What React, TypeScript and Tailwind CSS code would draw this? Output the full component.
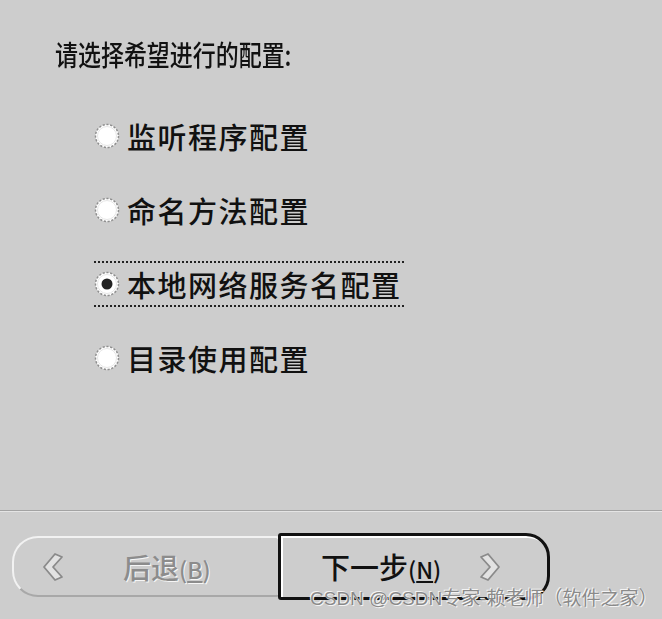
import React from "react";

const cjk = { fontFamily: '"Noto Sans CJK SC", "Noto Sans", sans-serif' };

function Radio({ checked }: { checked?: boolean }) {
  return (
    <svg width="26" height="26" viewBox="0 0 26 26" className="shrink-0">
      <circle cx="13" cy="13" r="11.5" fill="#ffffff" stroke="#8e8e8e" strokeWidth="1.5" strokeDasharray="2.2 1.6" />
      <circle cx="13" cy="13" r="9.5" fill="#ffffff" stroke="#e6e6e6" strokeWidth="1" />
      {checked && <circle cx="13" cy="13" r="5.5" fill="#222" />}
    </svg>
  );
}

function Option({ label, checked, focused }: { label: string; checked?: boolean; focused?: boolean }) {
  return (
    <div
      className={`flex items-center gap-[7px] h-[46px] w-[310px] ${focused ? "border-y-2 border-dotted border-[#222]" : "border-y-2 border-transparent"}`}
    >
      <Radio checked={checked} />
      <span className="text-[29px] leading-none font-medium text-[#111] tracking-[1.5px]" style={cjk}>
        {label}
      </span>
    </div>
  );
}

function Chevron({ right }: { right?: boolean }) {
  const d = "M15 3 L4 16 L15 29 L22 26 L13 16 L22 6 Z";
  return (
    <svg width="26" height="32" viewBox="0 0 26 32" style={right ? { transform: "scaleX(-1)" } : undefined}>
      <path d={d} fill="#e2e2e2" stroke="#8a8a8a" strokeWidth="1.8" strokeLinejoin="round" />
    </svg>
  );
}

export default function App() {
  return (
    <div className="w-[662px] h-[619px] bg-[#cdcdcd] flex flex-col overflow-hidden relative" style={cjk}>
      <div className="h-[510px] flex flex-col pt-[36px] pl-[55px]">
        <div className="text-[28px] leading-[36px] font-medium text-[#111] origin-left scale-x-[0.82] whitespace-nowrap">
          请选择希望进行的配置:
        </div>
        <div className="flex flex-col gap-[28px] mt-[41px] pl-[39px]">
          <Option label="监听程序配置" />
          <Option label="命名方法配置" />
          <Option label="本地网络服务名配置" checked focused />
          <Option label="目录使用配置" />
        </div>
      </div>
      <div className="h-[2px] bg-[#a3a3a3] border-b border-[#e4e4e4]" />
      <div className="flex items-center pl-[12px] pt-[21px]">
        <div className="w-[268px] h-[61px] rounded-l-[26px] rounded-r-[4px] border-2 border-[#f2f2f2] border-b-[#a8a8a8] flex items-center pl-[26px]">
          <Chevron />
          <span className="ml-[57px] text-[28px] leading-none font-medium text-[#8c8c8c] [text-shadow:1px_1px_0_#f6f6f6]">
            后退<span className="text-[23px]">(<span className="underline">B</span>)</span>
          </span>
        </div>
        <div className="-ml-[2px] w-[272px] h-[67px] rounded-r-[24px] rounded-l-[3px] border-[3px] border-[#111] shadow-[inset_2px_2px_0_#ffffff] flex items-center pl-[40px]">
          <span className="text-[29px] leading-none font-medium text-[#111]">
            下一步<span className="text-[23px]">(<span className="underline">N</span>)</span>
          </span>
          <div className="ml-[36px]">
            <Chevron right />
          </div>
        </div>
      </div>
      <div
        className="absolute left-[310px] top-[586px] text-[19px] leading-[26px] text-[#8a8a8a] whitespace-nowrap [text-shadow:1px_1px_0_#f4f4f4,-1px_-1px_0_#f4f4f4]"
        style={{ fontFamily: '"Liberation Sans", "Noto Sans CJK SC", sans-serif' }}
      >
        CSDN @CSDN专家-赖老师（软件之家）
      </div>
    </div>
  );
}
